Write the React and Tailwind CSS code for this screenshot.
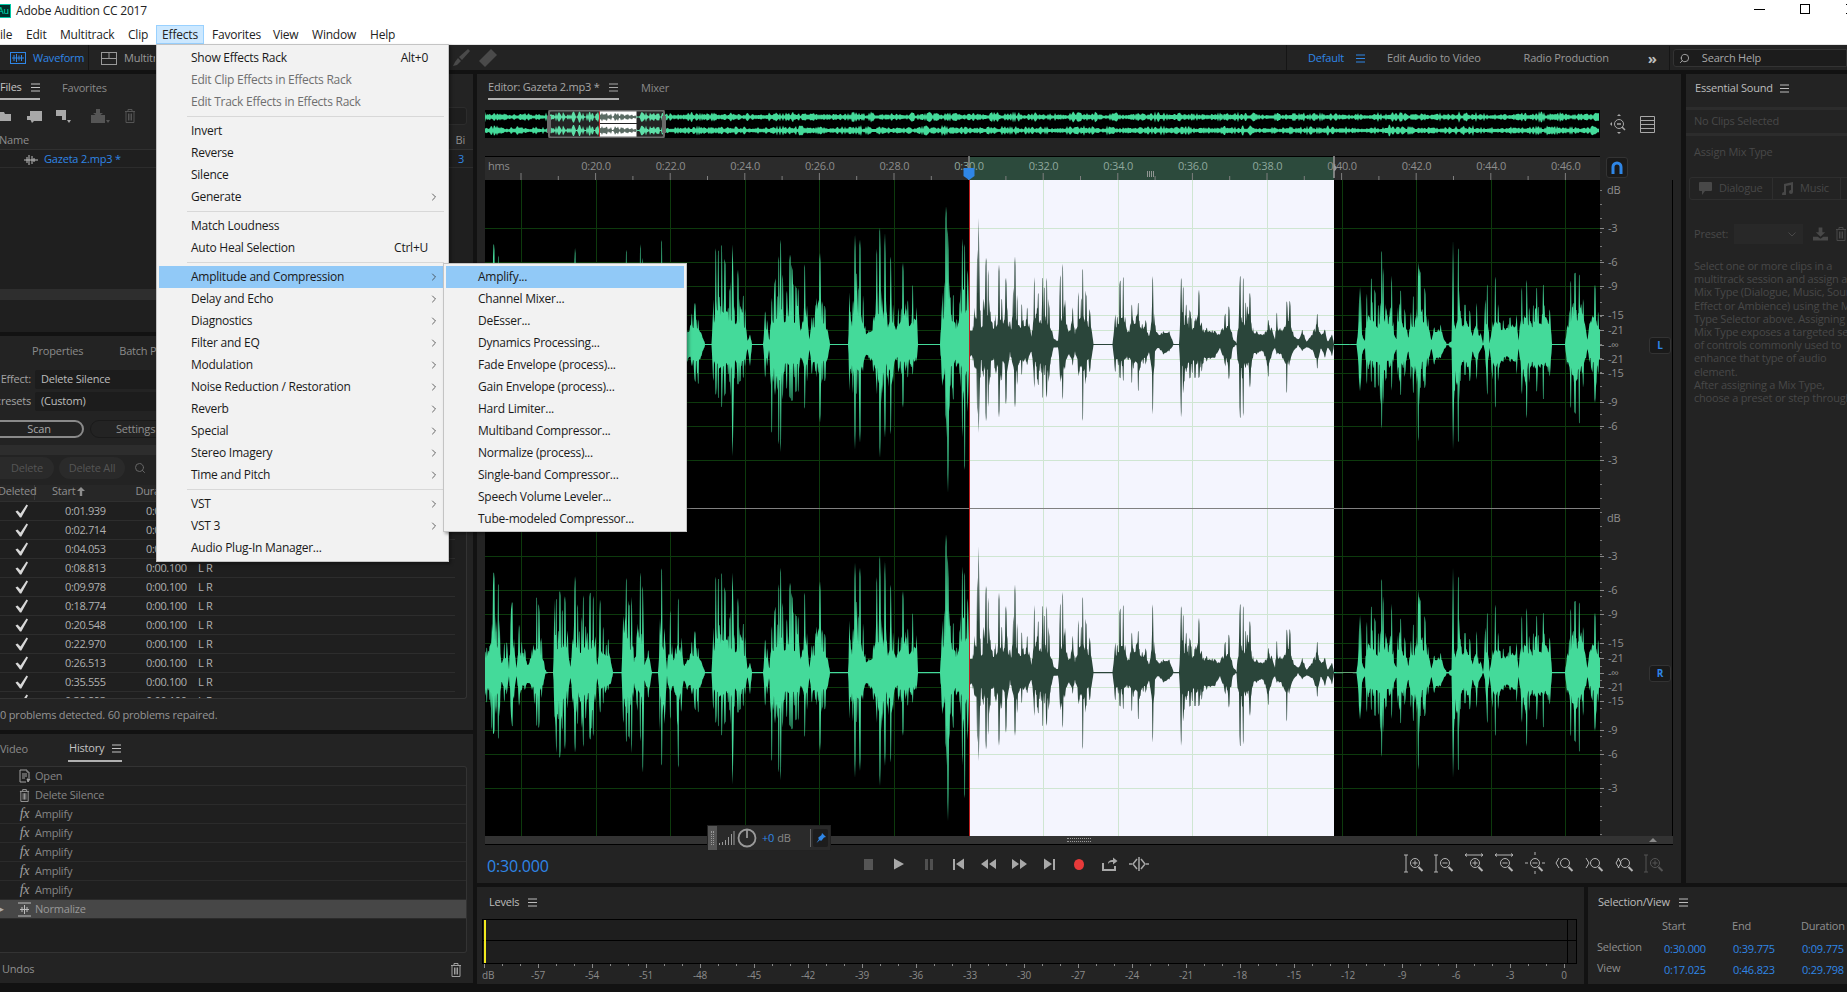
import { ChevronRight, Search } from "lucide-react";

// ---- menus ----
const effectsMenu = [
  [["Show Effects Rack", "Alt+0"], ["Edit Clip Effects in Effects Rack", "", "off"], ["Edit Track Effects in Effects Rack", "", "off"]],
  [["Invert"], ["Reverse"], ["Silence"], ["Generate", "", "sub"]],
  [["Match Loudness"], ["Auto Heal Selection", "Ctrl+U"]],
  [
    ["Amplitude and Compression", "", "sub", "hot"],
    ["Delay and Echo", "", "sub"],
    ["Diagnostics", "", "sub"],
    ["Filter and EQ", "", "sub"],
    ["Modulation", "", "sub"],
    ["Noise Reduction / Restoration", "", "sub"],
    ["Reverb", "", "sub"],
    ["Special", "", "sub"],
    ["Stereo Imagery", "", "sub"],
    ["Time and Pitch", "", "sub"],
  ],
  [["VST", "", "sub"], ["VST 3", "", "sub"], ["Audio Plug-In Manager..."]],
];

const ampMenu = [
  "Amplify...",
  "Channel Mixer...",
  "DeEsser...",
  "Dynamics Processing...",
  "Fade Envelope (process)...",
  "Gain Envelope (process)...",
  "Hard Limiter...",
  "Multiband Compressor...",
  "Normalize (process)...",
  "Single-band Compressor...",
  "Speech Volume Leveler...",
  "Tube-modeled Compressor...",
];

const repairs = ["0:01.939", "0:02.714", "0:04.053", "0:08.813", "0:09.978", "0:18.774", "0:20.548", "0:22.970", "0:26.513", "0:35.555", "0:38.893"];

const essentialText = [
  "Select one or more clips in a",
  "multitrack session and assign a",
  "Mix Type (Dialogue, Music, Sound",
  "Effect or Ambience) using the Mix",
  "Type Selector above. Assigning a",
  "Mix Type exposes a targeted set",
  "of controls commonly used to",
  "enhance that type of audio",
  "element.",
  "After assigning a Mix Type,",
  "choose a preset or step through",
  "the parameters to adjust the",
];

// ---- waveform envelope, read off the picture: [x, up, down] in 1/3 px ----
const segA = [[0,60,60],[5,75,90],[15,80,80],[20,110,170],[25,300,185],[28,300,180],[33,120,100],[40,285,210],[44,140,120],[50,20,20],[58,90,90],[66,90,60],[72,10,10],[78,190,130],[82,220,170],[88,80,60],[95,8,6],[102,145,100],[110,90,50],[120,70,50],[128,20,30],[140,60,45],[155,230,160],[162,200,165],[170,100,70],[180,10,8],[190,3,3],[205,3,3],[208,220,120],[214,220,240],[225,245,255],[232,180,160],[240,230,230],[248,120,100],[256,10,10],[262,90,80],[270,290,240],[278,200,150],[290,150,150],[295,240,230],[302,130,130],[315,240,200],[325,230,190],[332,100,80],[337,10,10],[345,220,120],[355,130,90],[370,100,50],[378,30,30],[384,5,5],[410,5,5],[414,150,140],[424,290,210],[432,200,190],[440,230,245],[447,30,30],[456,120,100],[466,305,200],[474,250,300],[478,20,20],[490,70,78],[500,5,5],[520,5,5],[524,130,150],[530,330,290],[540,100,130],[546,8,8],[556,195,145],[565,30,30],[580,230,295],[590,100,100],[596,20,20],[606,35,50],[620,90,60],[630,125,110],[640,70,120],[650,30,30],[660,5,5],[680,5,5],[684,100,100],[692,290,150],[700,280,160],[710,300,190],[720,250,150]];
const segB = [[0,160,110],[8,310,350],[12,100,100],[24,225,120],[30,110,110],[40,150,100],[46,100,60],[52,10,10],[60,30,65],[66,5,5],[100,5,5],[105,100,100],[112,70,60],[118,5,8],[125,135,280],[135,190,130],[146,255,295],[152,320,325],[158,200,150],[170,150,130],[180,270,160],[186,230,170],[198,170,140],[205,170,145],[212,30,30],[224,250,200],[232,100,100],[238,10,10],[245,80,90],[258,120,80],[270,275,235],[278,120,100],[285,115,110],[295,30,30],[300,5,5],[355,5,5],[358,160,140],[368,100,120],[375,330,315],[380,200,130],[390,315,295],[400,130,60],[408,30,30],[416,40,40],[430,75,80],[440,280,130],[450,350,340],[456,100,120],[465,335,280],[472,50,80],[482,275,280],[490,100,90],[496,45,40],[505,105,80],[519,245,190],[528,100,60],[533,130,100],[548,180,90],[560,110,50],[564,5,5],[630,5,5],[636,120,110],[648,415,225],[654,330,445],[660,140,120],[670,150,170],[680,70,60],[690,130,90],[697,320,270],[704,300,385],[714,210,170]];
const segC = [[208,60,40],[218,40,40],[232,270,200],[236,395,275],[240,100,100],[250,130,90],[258,260,230],[265,220,180],[270,100,100],[285,70,70],[297,240,220],[305,130,100],[318,200,180],[330,50,20],[345,265,190],[352,130,110],[365,120,90],[382,110,60],[395,20,20],[403,205,130],[415,150,120],[428,200,160],[440,200,160],[447,120,100],[460,20,10],[475,10,10],[480,200,100],[488,245,170],[496,120,60],[505,35,30],[518,115,65],[525,30,20],[535,155,90],[548,230,235],[558,150,100],[570,100,80],[580,5,5],[638,5,5],[645,80,80],[660,190,100],[670,205,110],[683,30,40],[695,120,115],[715,125,140],[738,70,55],[748,20,20],[758,215,220],[765,60,20],[775,30,10],[790,40,30],[808,40,20],[820,5,5],[838,5,5],[843,200,220],[850,170,135],[870,100,100],[885,70,100],[897,165,100],[905,60,80],[920,50,50],[945,40,40],[960,30,10],[975,90,60],[987,115,105],[998,20,10],[1010,5,5],[1020,205,220],[1030,200,215],[1037,120,60],[1050,155,130],[1060,40,30],[1070,40,30],[1090,30,20],[1105,75,100],[1115,50,30],[1125,15,10],[1130,100,30],[1145,40,30],[1160,130,150],[1170,130,50],[1180,30,20],[1195,15,5],[1207,45,20],[1220,8,8],[1240,40,20],[1252,95,75],[1262,30,10],[1275,45,40],[1283,8,8],[1296,30,35],[1302,5,5]];
const segD = [[0,3,3],[20,5,5],[25,50,50],[28,170,140],[32,175,140],[36,30,30],[45,10,10],[50,150,120],[64,200,110],[75,160,130],[85,110,120],[95,290,260],[100,215,160],[108,100,100],[125,210,140],[132,30,30],[140,15,15],[142,110,90],[152,165,155],[165,100,90],[175,15,15],[182,90,100],[190,150,150],[198,70,70],[205,250,310],[210,220,130],[225,165,130],[235,70,60],[244,10,10],[252,50,60],[272,60,40],[280,20,20],[290,5,5],[305,10,10],[309,315,315],[314,30,120],[325,310,310],[330,100,110],[345,120,90],[360,100,110],[368,20,15],[380,130,110],[385,30,30],[392,35,15],[400,3,3],[405,120,20],[412,190,165],[418,5,5],[426,45,90],[436,210,195],[445,110,100],[460,70,50],[480,80,50],[500,90,90],[506,5,5],[515,170,145],[530,195,225],[538,100,100],[560,170,140],[580,180,165],[600,100,90],[606,5,5],[645,5,5],[650,40,50],[662,190,190],[675,215,205],[688,210,240],[700,130,120],[712,10,10],[718,60,50],[735,180,175],[745,90,80]];

const envelope = [
  ...segA.map(([z, u, d]) => [z / 3, u / 3, d / 3]),
  ...segB.map(([z, u, d]) => [245 + z / 3, u / 3, d / 3]),
  ...segC.map(([z, u, d]) => [415 + z / 3, u / 3, d / 3]),
  ...segD.map(([z, u, d]) => [865 + z / 3, u / 3, d / 3]),
];

function rnd(i) {
  const s = Math.sin(i * 12.9898) * 43758.5453;
  return s - Math.floor(s);
}

function ampAt(x) {
  let k = 0;
  while (k < envelope.length - 2 && envelope[k + 1][0] < x) k++;
  const [x0, u0, d0] = envelope[k];
  const [x1, u1, d1] = envelope[k + 1];
  const t = Math.max(0, Math.min(1, (x - x0) / (x1 - x0 || 1)));
  const dist = Math.min(Math.abs(x - x0), Math.abs(x1 - x));
  return [u0 + (u1 - u0) * t, d0 + (d1 - d0) * t, dist];
}

// solid body near the centre, thin spikes only where the envelope peaks
function shape(a, dist, r) {
  if (a < 2.5) return a * 0.35;
  if (dist < 0.6) return a;
  if (r > 0.95) return a * 0.85;
  const base = Math.min(a, 14);
  return base * (0.8 + 0.2 * r) + (a - base) * (0.2 + 0.45 * r * r);
}

function wavePath(cy, seed) {
  const top = [];
  const bot = [];
  for (let i = 0; i <= 2230; i++) {
    const x = i / 2;
    const [u, d, dist] = ampAt(x);
    const up = shape(u, dist, rnd(Math.floor(i / 2) + seed));
    const dn = shape(d, dist, rnd(Math.floor(i / 2) + seed + 999));
    top.push(`${x} ${(cy - up).toFixed(1)}`);
    bot.unshift(`${x} ${(cy + dn).toFixed(1)}`);
  }
  return `M${top.join("L")}L${bot.join("L")}Z`;
}

function overviewPath(cy, seed) {
  const top = [];
  const bot = [];
  for (let i = 0; i <= 1114; i++) {
    let a;
    if (i >= 63 && i <= 180) {
      const [u] = ampAt(((i - 63) / 117) * 1115);
      a = Math.min(5.5, u / 18 + 0.5);
    } else {
      const slow = 0.7 + 0.18 * (Math.sin(i * 0.31 + seed) + Math.sin(i * 0.083 + seed * 2));
      a = 1.2 + 4.5 * Math.pow(rnd(i + seed), 1.5) * slow;
    }
    top.push(`${i} ${(cy - a).toFixed(1)}`);
    bot.unshift(`${i} ${(cy + a).toFixed(1)}`);
  }
  return `M${top.join("L")}L${bot.join("L")}Z`;
}

const ticks = Array.from({ length: 15 }, (_, k) => 36 + 74.6 * k);
const hLines = [48, 82, 106, 135, 150, 179, 193, 222, 246, 280];
const dbLabels = [["-3", 48], ["-6", 82], ["-9", 106], ["-15", 135], ["-21", 150], ["-∞", 165], ["-21", 179], ["-15", 193], ["-9", 222], ["-6", 246], ["-3", 280]];

// ---- small icons ----
function Burger({ className = "" }) {
  return (
    <svg width="9" height="9" viewBox="0 0 9 9" className={`shrink-0 ${className}`}>
      <path d="M0 1h9M0 4.5h9M0 8h9" stroke="currentColor" strokeWidth="1" />
    </svg>
  );
}

function Check() {
  return (
    <svg width="14" height="14" viewBox="0 0 14 14">
      <path d="M0.5 7.5L2.5 6.5L5.5 9.5L11.5 0.5L13 1.5L6.3 13.5L5 13.5Z" fill="#d8d8d8" />
    </svg>
  );
}

function TrashIcon({ color = "#8f8f8f", size = 12 }) {
  return (
    <svg width={size} height={size + 2} viewBox="0 0 12 14" fill="none" stroke={color}>
      <path d="M1 2.5h10M4 2.5v-2h4v2M2 2.5v11h8v-11M4.5 4.5v7M6 4.5v7M7.5 4.5v7" />
    </svg>
  );
}

function ZoomIcon({ kind, dim }) {
  const c = dim ? "#555" : "#b4b4b4";
  const glass = kind === "left" || kind === "right" || kind === "both" ? "" : kind.includes("in") ? "M7 9.5h5M9.5 7v5" : "M7 9.5h5";
  return (
    <svg width="26" height="24" viewBox="0 0 26 24" fill="none" stroke={c}>
      <circle cx="10" cy="10" r="4.5" transform="translate(3 1)" />
      <path d="M16.5 15l4 4" strokeWidth="2" />
      <path d={glass} transform="translate(3.5 1.5)" />
      {(kind === "vin" || kind === "vout" || kind === "dimin") && <path d="M4 3v17M2 3h4M2 20h4" />}
      {(kind === "hin" || kind === "hout") && <path d="M3 3h18M3 3l2-1.5M3 3l2 1.5M21 3l-2-1.5M21 3l-2 1.5" />}
      {kind === "all" && <path d="M13 0v3M13 19v3M6 11H3M23 11h-3" />}
      {(kind === "left" || kind === "both") && <path d="M7 6l-3 5 3 5" />}
      {kind === "right" && <path d="M4 6l3 5-3 5" />}
      {kind === "both" && <path d="M8 6l3 5-3 5" transform="translate(-2 0)" />}
    </svg>
  );
}

function Transport({ kind }) {
  return (
    <svg width="20" height="16" viewBox="0 0 20 16">
      {kind === "stop" && <rect x="5" y="3" width="9" height="11" fill="#555" />}
      {kind === "play" && <path d="M5 2.5L15 8L5 13.5Z" fill="#a8a8a8" />}
      {kind === "pause" && <path d="M6 3h3v11H6zM11 3h3v11h-3z" fill="#505050" />}
      {kind === "prev" && <path d="M4 3h2v11H4zM15 2.5v11L7 8z" fill="#a8a8a8" />}
      {kind === "rew" && <path d="M2 8l7-5v10zM10 8l7-5v10z" fill="#a8a8a8" />}
      {kind === "ff" && <path d="M18 8l-7-5v10zM10 8L3 3v10z" fill="#a8a8a8" />}
      {kind === "next" && <path d="M14 3h2v11h-2zM5 2.5v11L13 8z" fill="#a8a8a8" />}
      {kind === "rec" && <ellipse cx="10" cy="8.5" rx="5" ry="5.5" fill="#e83a3a" />}
      {kind === "loop" && <path d="M3 7h2v6h10v-3h2v5H3zM9 8c0-3 2-4 5-4V1.5L18.5 5 14 8.5V6c-2 0-4 0-5 2z" fill="#a8a8a8" />}
      {kind === "skip" && <path d="M8 3L4 8l4 5M12 3l4 5-4 5M10 1v14M0 8h3M17 8h3" fill="none" stroke="#a8a8a8" strokeWidth="1.5" />}
    </svg>
  );
}

function Grid2({ color }) {
  return (
    <svg width="16" height="13" viewBox="0 0 16 13" fill="none" stroke={color} className="shrink-0">
      <rect x="0.5" y="0.5" width="15" height="12" />
      <path d="M0.5 6.5h15M8 0.5v6" />
    </svg>
  );
}

function TabRow({ children, className = "" }) {
  return <div className={`flex items-center text-[11px] pt-[2px] ${className}`}>{children}</div>;
}

function Menu() {
  return (
    <>
      <div className="absolute left-[156px] top-[44px] w-[293px] h-[518px] bg-[#f2f2f2] border border-[#c4c4c4] shadow-[2px_2px_3px_rgba(0,0,0,0.35)] text-[12px] tracking-[-0.25px] text-[#1a1a1a] py-[2px]">
        {effectsMenu.map((group, g) => (
          <div key={g}>
            {g > 0 && <div className="ml-[30px] mr-[4px] my-[3px] h-[1px] bg-[#d8d8d8]" />}
            {group.map(([label, keys, kind, hot]) => (
              <div
                key={label}
                className={`flex items-center h-[22px] pl-[32px] pr-[6px] mx-[2px] ${hot ? "bg-[#91c9f7]" : ""} ${kind === "off" ? "text-[#6f6f6f]" : ""}`}
              >
                <span className="flex-1 whitespace-nowrap">{label}</span>
                {keys && <span className="mr-[12px]">{keys}</span>}
                {kind === "sub" && <ChevronRight size={12} strokeWidth={1.5} className="text-[#333]" />}
              </div>
            ))}
          </div>
        ))}
      </div>
      <div className="absolute left-[443px] top-[263px] w-[244px] h-[269px] bg-[#f2f2f2] border border-[#c4c4c4] shadow-[2px_2px_3px_rgba(0,0,0,0.35)] text-[12px] tracking-[-0.25px] text-[#1a1a1a] pt-[2px]">
        {ampMenu.map((label, i) => (
          <div key={label} className={`flex items-center h-[22px] pl-[32px] mx-[2px] ${i === 0 ? "bg-[#91c9f7]" : ""}`}>
            {label}
          </div>
        ))}
      </div>
    </>
  );
}

function FilesPanel() {
  return (
    <div className="h-[258px] bg-[#232323] flex flex-col text-[#9a9a9a]">
      <TabRow className="h-[26px]">
        <div className="h-full w-[40px] flex items-center gap-[9px] border-b-2 border-[#b0b0b0] text-[#c4c4c4]">
          Files <Burger />
        </div>
        <span className="ml-[22px] text-[#8a8a8a]">Favorites</span>
      </TabRow>
      <div className="h-[32px] flex items-center gap-[12px] text-[#b0b0b0] relative">
        <svg width="13" height="12" viewBox="0 0 13 12" fill="#a8a8a8" className="ml-[-1px]"><path d="M0 2h5l1 2h6v7H0z" /></svg>
        <svg width="17" height="14" viewBox="0 0 17 14" fill="#a8a8a8" className="ml-[2px]"><path d="M4 2h12v10H8l-2 2-2-4zM1 7h5l2 2-2 2H1z" /></svg>
        <svg width="17" height="14" viewBox="0 0 17 14" fill="#a8a8a8"><path d="M1 1h10v10H7V7H1zM12 11h4l-2 3z" /></svg>
        <svg width="20" height="16" viewBox="0 0 20 16" fill="#555" className="ml-[6px]"><path d="M1 7h14v8H1zM6 5V1h4v4h3L8 9 3 5zM16 12h4l-2 3z" /></svg>
        <span className="ml-[2px]"><TrashIcon color="#555" /></span>
        <div className="absolute right-[6px] top-[7px] h-[18px] w-[60px] bg-[#1e1e1e] rounded-[3px] border border-[#2c2c2c]" />
      </div>
      <div className="h-[18px] flex items-center text-[11px] border-b border-[#303030] text-[#8d8d8d]">
        <span className="ml-[-1px]">Name</span>
        <span className="ml-auto mr-[8px]">Bi</span>
      </div>
      <div className="h-[18px] pt-[2px] flex items-center text-[11px] border-b border-[#2c2c2c] bg-[#1f1f1f]">
        <svg width="14" height="10" viewBox="0 0 14 10" className="ml-[24px] mr-[6px]" stroke="#bdbdbd" fill="none"><path d="M0 5h14M3 2v6M5 0v10M8 1v8M10 3v4" /></svg>
        <span className="text-[#2f86e6]">Gazeta 2.mp3 *</span>
        <span className="ml-auto mr-[9px] text-[#2f86e6]">3</span>
      </div>
      <div className="flex-1 bg-[#1f1f1f]" />
      <div className="h-[11px] bg-[#2e2e2e]" />
      <div className="h-[32px] bg-[#1f1f1f]" />
    </div>
  );
}

function PropertiesPanel() {
  return (
    <div className="h-[394px] bg-[#232323] flex flex-col text-[11px] text-[#a4a4a4]">
      <TabRow className="h-[28px] text-[#8a8a8a]">
        <span className="ml-[32px]">Properties</span>
        <span className="ml-[36px]">Batch Process</span>
      </TabRow>
      <div className="mt-[6px] flex items-center h-[19px] mb-[3px]">
        <span className="w-[31px] text-right">Effect:</span>
        <div className="ml-[4px] flex-1 mr-[6px] h-full bg-[#1c1c1c] rounded-[2px] pl-[6px] flex items-center text-[#bdbdbd]">Delete Silence</div>
      </div>
      <div className="flex items-center h-[19px]">
        <span className="w-[31px] text-right whitespace-nowrap overflow-hidden [direction:rtl]">resets:</span>
        <div className="ml-[4px] flex-1 mr-[6px] h-full bg-[#1c1c1c] rounded-[2px] pl-[6px] flex items-center text-[#bdbdbd]">(Custom)</div>
      </div>
      <div className="mt-[9px] flex h-[18px]">
        <div className="ml-[-14px] w-[98px] border-2 border-[#8a8a8a] rounded-full flex items-center justify-center pl-[8px] text-[#a8a8a8]">Scan</div>
        <div className="ml-[6px] w-[120px] border border-[#1a1a1a] rounded-[9px] flex items-center pl-[25px] text-[#8e8e8e]">Settings</div>
      </div>
      <div className="mt-[7px] h-[10px] bg-[#2d2d2d]" />
      <div className="mt-[2px] flex items-center h-[22px] text-[#555]">
        <div className="ml-[-10px] w-[64px] h-full bg-[#2a2a2a] rounded-full flex items-center justify-center pl-[10px]">Delete</div>
        <div className="ml-[5px] w-[66px] h-full bg-[#2a2a2a] rounded-full flex items-center justify-center">Delete All</div>
        <Search size={12} className="ml-[9px] text-[#666]" />
      </div>
      <div className="mt-[6px] h-[214px] mr-[6px] border-b border-r border-[#333] overflow-hidden rounded-br-[3px] bg-[#1f1f1f]">
        <div className="h-[17px] pb-[3px] flex items-center bg-[#272727] text-[#8e8e8e] border-b border-[#2f2f2f]">
          <span className="w-[37px] ml-[-2px] border-r border-[#3a3a3a] mr-[17px]">Deleted</span>
          <span>Start</span>
          <svg width="8" height="9" viewBox="0 0 8 9" fill="#8e8e8e" className="ml-[2px]"><path d="M4 0l4 4H5.2v5H2.8V4H0z" /></svg>
          <span className="ml-[50px]">Duration</span>
        </div>
        {repairs.map((t) => (
          <div key={t} className="h-[19px] flex items-center w-[455px] border-b border-[#2d2d2d] text-[#b0b0b0] tracking-[-0.35px]">
            <span className="w-[65px] pl-[15px]"><Check /></span>
            <span className="w-[81px]">{t}</span>
            <span className="w-[52px]">0:00.100</span>
            <span>L R</span>
          </div>
        ))}
      </div>
      <div className="flex-1 pt-[1px] flex items-center text-[#959595]">
        <span className="ml-[-6px] whitespace-nowrap">60 problems detected. 60 problems repaired.</span>
      </div>
    </div>
  );
}

function HistoryPanel() {
  const rows = [
    ["Open", "open"], ["Delete Silence", "trash"], ["Amplify", "fx"], ["Amplify", "fx"], ["Amplify", "fx"], ["Amplify", "fx"], ["Amplify", "fx"], ["Normalize", "norm"],
  ];
  return (
    <div className="flex-1 bg-[#232323] flex flex-col text-[11px]">
      <TabRow className="h-[28px] shrink-0">
        <span className="text-[#8a8a8a] w-[68px]">Video</span>
        <div className="h-full w-[54px] pl-[1px] flex items-center gap-[8px] border-b-2 border-[#b0b0b0] text-[#c4c4c4]">
          History <Burger />
        </div>
      </TabRow>
      <div className="mt-[4px] h-[187px] mr-[6px] border-t border-r border-b border-[#333] rounded-r-[3px] bg-[#1f1f1f] shrink-0">
        {rows.map(([label, icon], i) => (
          <div key={i} className={`h-[19px] flex items-center border-b border-[#2b2b2b] ${icon === "norm" ? "bg-[#474747] text-[#999]" : "text-[#858585]"}`}>
            {icon === "norm" ? (
              <span className="w-[14px] text-[#aaa] text-[9px] ml-[-3px] mr-[3px]">▶</span>
            ) : (
              <span className="w-[14px]" />
            )}
            <span className="w-[21px] flex justify-center text-[#a0a0a0]">
              {icon === "open" && (
                <svg width="12" height="14" viewBox="0 0 12 14" fill="none" stroke="#a0a0a0"><path d="M1 1h7v2h2v6M1 1v12h6M3 5h5M3 7h5M3 9h3" /><path d="M8 10h3l-2 3z" fill="#a0a0a0" /></svg>
              )}
              {icon === "trash" && <TrashIcon color="#a0a0a0" size={11} />}
              {icon === "fx" && <span className="font-['Liberation_Serif',serif] italic text-[14px] leading-none">fx</span>}
              {icon === "norm" && (
                <svg width="13" height="15" viewBox="0 0 13 15" fill="none" stroke="#bdbdbd"><path d="M0 1h13M0 14h13M2 7.5h9M4 5v5M6.5 3v9M9 5v5" /></svg>
              )}
            </span>
            <span>{label}</span>
          </div>
        ))}
      </div>
      <div className="flex-1 pt-[3px] flex items-center justify-between pr-[11px] pl-[2px] text-[#8f8f8f]">
        <span>Undos</span>
        <TrashIcon color="#a0a0a0" />
      </div>
    </div>
  );
}

function Overview() {
  const ovA = overviewPath(7, 1);
  const ovB = overviewPath(20.5, 4);
  return (
    <svg width="1115" height="28" className="bg-black shrink-0">
      <clipPath id="ovsel"><rect x="114.5" y="0" width="37" height="28" /></clipPath>
      <path d={ovA} fill="#44da9a" />
      <path d={ovB} fill="#44da9a" />
      <rect x="63" y="0" width="117" height="28" fill="#ffffff" opacity="0.14" />
      <rect x="114.5" y="0" width="37" height="13" fill="#fff" />
      <rect x="114.5" y="14" width="37" height="14" fill="#fff" />
      <path d={ovA} fill="#5a6b63" clipPath="url(#ovsel)" />
      <path d={ovB} fill="#5a6b63" clipPath="url(#ovsel)" />
      <path d="M114.5 0v28" stroke="#c23030" />
      <rect x="64" y="0.5" width="115" height="27" rx="2" fill="none" stroke="#6a6a6a" strokeWidth="2" />
      <rect x="62" y="6" width="4" height="17" fill="#6a6a6a" />
      <rect x="177" y="6" width="4" height="17" fill="#6a6a6a" />
    </svg>
  );
}

function Ruler() {
  const labels = ["0:20.0", "0:22.0", "0:24.0", "0:26.0", "0:28.0", "0:30.0", "0:32.0", "0:34.0", "0:36.0", "0:38.0", "0:40.0", "0:42.0", "0:44.0", "0:46.0"];
  return (
    <svg width="1115" height="24" className="shrink-0" fill="#8d8d8d">
      <rect width="1115" height="24" fill="#2b2b2b" />
      <rect x="484" width="365" height="24" fill="#2c4a3c" />
      <path d="M0 0.5h1115" stroke="#000" />
      <text x="3" y="14" fontSize="11">hms</text>
      {labels.map((l, k) => (
        <text key={l} x={111 + 74.6 * k} y="14" fontSize="11" textAnchor="middle" fill={k >= 5 && k < 10 ? "#8fa89c" : "#8d8d8d"}>{l}</text>
      ))}
      {ticks.map((x) => (
        <path key={x} d={`M${x} 17v7M${x + 37.3} 20v4`} stroke="#7e7e7e" />
      ))}
      <path d="M484 0v12" stroke="#8a8a8a" strokeWidth="1.5" />
      <path d="M478.5 12h11v8l-5.5 4-5.5-4z" fill="#2f86e6" />
      <path d="M849 0v22M849 9l2 3-2 3" stroke="#9a9a9a" strokeWidth="1.5" fill="none" />
      <path d="M662.5 15v6M664.5 15v6M666.5 15v6M668.5 15v6" stroke="#a8a8a8" strokeWidth="0.8" />
    </svg>
  );
}

function WaveCanvas() {
  const pathL = wavePath(164.5, 7);
  const pathR = wavePath(492.7, 7);
  return (
    <svg width="1115" height="656" className="bg-black shrink-0">
      <clipPath id="sel"><rect x="484" y="0" width="365" height="656" /></clipPath>
      <clipPath id="nosel"><path d="M0 0h484v656H0zM849 0h266v656H849z" /></clipPath>
      <rect x="484" width="365" height="656" fill="#f4f5fe" />
      {[0, 328].flatMap((off) =>
        hLines.map((y) => (
          <g key={y + off}>
            <path d={`M0 ${y + off + 0.5}h1115`} stroke="#0d3a0d" clipPath="url(#nosel)" />
            <path d={`M0 ${y + off + 0.5}h1115`} stroke="#cfe6d2" clipPath="url(#sel)" />
          </g>
        ))
      )}
      {ticks.map((x) => (
        <g key={x}>
          <path d={`M${Math.round(x) + 0.5} 0v656`} stroke="#0d3a0d" clipPath="url(#nosel)" />
          <path d={`M${Math.round(x) + 0.5} 0v656`} stroke="#cfe6d2" clipPath="url(#sel)" />
        </g>
      ))}
      <path d="M0 164.5h1115M0 492.5h1115" stroke="#c00000" />
      <path d={pathL} fill="#44da9a" clipPath="url(#nosel)" />
      <path d={pathR} fill="#44da9a" clipPath="url(#nosel)" />
      <path d={pathL} fill="#2a453a" clipPath="url(#sel)" />
      <path d={pathR} fill="#2a453a" clipPath="url(#sel)" />
      <path d="M0 328.5h1115" stroke="#808080" />
      <path d="M484.5 0v656" stroke="#c02020" />
    </svg>
  );
}

function DbRuler() {
  const minor = [];
  for (let y = 10; y < 656; y += 14) minor.push(y);
  return (
    <div className="relative w-[73px] h-[656px] border-r border-black bg-[#232323] shrink-0">
      <svg width="72" height="656" fill="#8f8f8f">
        <text x="7" y="14" fontSize="11">dB</text>
        <text x="7" y="342" fontSize="11">dB</text>
        {minor.map((y) => <path key={y} d={`M0 ${y + 0.5}h2`} stroke="#777" />)}
        {[0, 328].flatMap((off) =>
          dbLabels.map(([l, y]) => (
            <g key={`${l}${y}${off}`}>
              <path d={`M0 ${y + off + 0.5}h4`} stroke="#888" />
              <text x="8" y={y + off + 4} fontSize="11">{l}</text>
            </g>
          ))
        )}
      </svg>
      <div className="absolute left-[49px] top-[157px] w-[22px] h-[17px] bg-[#1a1a1a] border border-[#333] rounded-[3px] text-[#2f86e6] text-[10px] font-bold flex items-center justify-center">L</div>
      <div className="absolute left-[49px] top-[485px] w-[22px] h-[17px] bg-[#1a1a1a] border border-[#333] rounded-[3px] text-[#2f86e6] text-[10px] font-bold flex items-center justify-center">R</div>
    </div>
  );
}

function Hud() {
  return (
    <div className="absolute left-[230px] top-[751px] w-[124px] h-[26px] bg-[#2a2a2a] border border-[#222] flex items-center text-[11px]">
      <div className="w-[9px] h-full bg-[#555] flex items-center justify-center">
        <div className="w-[3px] h-[14px] border-x border-dotted border-[#999]" />
      </div>
      <svg width="17" height="16" viewBox="0 0 17 16" className="ml-[1px]" stroke="#9a9a9a"><path d="M1.5 15v-2M4.5 15v-3M7.5 15v-5M10.5 15V7M13.5 15V4M16 15V1" /></svg>
      <svg width="20" height="20" viewBox="0 0 20 20" fill="none" stroke="#9a9a9a" strokeWidth="1.8" className="ml-[2px]"><circle cx="10" cy="10" r="8.5" /><path d="M10 2v8" /></svg>
      <span className="ml-[5px] text-[#2f86e6]">+0</span>
      <span className="ml-[3px] text-[#888]">dB</span>
      <div className="ml-auto h-[18px] w-[1px] bg-[#666]" />
      <div className="mx-[2px] w-[15px] h-[18px] bg-[#1d1d1d] rounded-[2px] flex items-center justify-center">
        <svg width="10" height="10" viewBox="0 0 10 10" fill="#2f86e6"><path d="M6 0l4 4-2 .5-2 2.5L5 8 2 5l1-1 2.5-2zM3 6l1 1-3.5 3z" /></svg>
      </div>
    </div>
  );
}

function EditorPanel() {
  return (
    <div className="relative w-[1204px] shrink-0 bg-[#232323] flex flex-col">
      <TabRow className="h-[26px] ml-[11px] shrink-0">
        <div className="h-full w-[131px] flex items-center justify-between pr-[1px] border-b-2 border-[#b0b0b0] text-[#a8a8a8]">
          Editor: Gazeta 2.mp3 * <Burger />
        </div>
        <span className="ml-[22px] text-[#8a8a8a]">Mixer</span>
      </TabRow>
      <div className="mt-[10px] ml-[8px] flex items-center shrink-0">
        <Overview />
        <svg width="18" height="20" viewBox="0 0 18 20" fill="none" stroke="#a8a8a8" className="ml-[10px]">
          <circle cx="9" cy="10" r="4.5" /><path d="M7 10h4M12 13l3 3" strokeWidth="1.5" /><path d="M9 0l-2 2h4zM9 20l-2-2h4zM0 10l2-2v4z" fill="#a8a8a8" stroke="none" />
        </svg>
        <svg width="15" height="17" viewBox="0 0 15 17" fill="none" stroke="#a8a8a8" className="ml-[12px]"><path d="M0.5 0.5h14v16H0.5zM0.5 4.5h14M0.5 8.5h14M0.5 12.5h14" /></svg>
      </div>
      <div className="mt-[18px] ml-[8px] flex items-start shrink-0">
        <Ruler />
        <div className="ml-[6px] mt-[1px] w-[22px] h-[21px] bg-[#1a1a1a] border border-[#333] rounded-[3px] flex items-center justify-center">
          <svg width="12" height="13" viewBox="0 0 12 13" fill="none" stroke="#2f86e6" strokeWidth="3"><path d="M2 13V6a4 4 0 018 0v7" /></svg>
        </div>
      </div>
      <div className="ml-[8px] flex shrink-0">
        <WaveCanvas />
        <DbRuler />
      </div>
      <div className="ml-[8px] w-[1188px] h-[9px] bg-[#333] border-b border-black relative flex items-center justify-center shrink-0">
        <div className="w-[24px] h-[4px] border-y border-dotted border-[#999]" />
        <div className="absolute right-[16px] top-[2px] w-0 h-0 border-x-[4px] border-b-[4px] border-x-transparent border-b-[#888]" />
      </div>
      <div className="flex-1 flex items-center">
        <span className="ml-[10px] w-[367px] pt-[4px] text-[#2f86e6] text-[16px]">0:30.000</span>
        {["stop", "play", "pause", "prev", "rew", "ff", "next", "rec", "loop", "skip"].map((k) => (
          <div key={k} className="w-[30px] flex justify-center"><Transport kind={k} /></div>
        ))}
        <div className="ml-[248px] flex gap-[4px]">
          {["vin", "vout", "hin", "hout", "all", "left", "right", "both"].map((k) => (
            <ZoomIcon key={k} kind={k} />
          ))}
          <ZoomIcon kind="dimin" dim />
        </div>
      </div>
      <Hud />
    </div>
  );
}

function EssentialPanel() {
  return (
    <div className="flex-1 min-w-0 bg-[#232323] overflow-hidden text-[11px] text-[#484848] whitespace-nowrap">
      <div className="h-[33px] pb-[5px] pl-[9px] flex items-center gap-[7px] text-[#bdbdbd]">Essential Sound <Burger /></div>
      <div className="h-[3px] bg-[#2c2c2c]" />
      <div className="h-[23px] pl-[8px] flex items-center">No Clips Selected</div>
      <div className="h-[3px] bg-[#2c2c2c]" />
      <div className="h-[33px] pl-[8px] flex items-center">Assign Mix Type</div>
      <div className="mt-[8px] ml-[3px] h-[23px] w-[200px] border border-[#2e2e2e] rounded-[3px] flex items-center">
        <div className="w-[83px] h-full border-r border-[#2e2e2e] flex items-center gap-[7px] pl-[9px]">
          <svg width="13" height="13" viewBox="0 0 13 13" fill="#484848"><path d="M1 0h11a1 1 0 011 1v7a1 1 0 01-1 1H6l-3 4V9H1a1 1 0 01-1-1V1a1 1 0 011-1z" /></svg>
          Dialogue
        </div>
        <div className="w-[68px] h-full border-r border-[#2e2e2e] flex items-center gap-[6px] pl-[8px]">
          <svg width="13" height="13" viewBox="0 0 13 13" fill="#484848"><path d="M3 2l9-2v10a2 2 0 11-2-2V3L5 4v8a2 2 0 11-2-2z" /></svg>
          Music
        </div>
      </div>
      <div className="mt-[24px] h-[20px] pl-[8px] flex items-center">
        Preset:
        <div className="ml-[6px] w-[73px] h-full bg-[#282828] flex items-center justify-end pr-[7px]">
          <svg width="8" height="5" viewBox="0 0 8 5" fill="none" stroke="#484848"><path d="M0.5 0.5L4 4l3.5-3.5" /></svg>
        </div>
        <svg width="16" height="14" viewBox="0 0 16 14" fill="#484848" className="ml-[10px]"><path d="M0 10h5l3 2 3-2h5v4H0zM6 0h4v5h3l-5 5-5-5h3z" /></svg>
        <span className="ml-[7px]"><TrashIcon color="#484848" /></span>
      </div>
      <div className="mt-[15px] pl-[8px] h-[148px] overflow-hidden leading-[13.2px]">
        {essentialText.map((l) => <div key={l}>{l}</div>)}
      </div>
    </div>
  );
}

function LevelsPanel() {
  const nums = [-57, -54, -51, -48, -45, -42, -39, -36, -33, -30, -27, -24, -21, -18, -15, -12, -9, -6, -3, 0];
  const small = Array.from({ length: 60 }, (_, k) => 2 + k * 18);
  return (
    <div className="w-[1107px] shrink-0 bg-[#232323] flex flex-col text-[11px]">
      <TabRow className="h-[28px] ml-[12px] gap-[9px] text-[#bdbdbd] shrink-0">Levels <Burger /></TabRow>
      <div className="ml-[5px] mt-[4px] w-[1095px] h-[45px] border border-black bg-[#1e1e1e] flex flex-col relative shrink-0">
        <div className="absolute left-[1px] top-0 bottom-0 w-[2px] bg-[#f0e81e]" />
        <div className="h-[21px] border-b border-black" />
        <div className="absolute right-[8px] top-0 bottom-0 w-[1px] bg-black" />
      </div>
      <svg width="1100" height="20" className="ml-[5px] shrink-0" fill="#8a8a8a">
        {small.map((x) => <path key={x} d={`M${x + 0.5} 0v2`} stroke="#888" />)}
        <path d="M2.5 0v4" stroke="#888" />
        <text x="0" y="15" fontSize="10">dB</text>
        {nums.map((n, k) => (
          <g key={n}>
            <path d={`M${56 + 54 * k + 0.5} 0v4`} stroke="#888" />
            <text x={56 + 54 * k} y="15" fontSize="10" textAnchor="middle">{n}</text>
          </g>
        ))}
      </svg>
    </div>
  );
}

function SelectionPanel() {
  return (
    <div className="flex-1 min-w-0 bg-[#232323] text-[11px] text-[#8f8f8f] whitespace-nowrap overflow-hidden">
      <TabRow className="h-[28px] pl-[10px] gap-[9px] text-[#bdbdbd]">Selection/View <Burger /></TabRow>
      <div className="grid grid-cols-[65px_70px_69px_70px] pl-[9px]">
        <div className="h-[22px]" />
        <div className="h-[22px] flex items-center">Start</div>
        <div className="h-[22px] flex items-center">End</div>
        <div className="h-[22px] flex items-center">Duration</div>
        <div className="h-[21px] flex items-center">Selection</div>
        <div className="h-[21px] flex items-center pl-[2px] text-[#2f86e6] pt-[3px]">0:30.000</div>
        <div className="h-[21px] flex items-center pl-[1px] text-[#2f86e6] pt-[3px]">0:39.775</div>
        <div className="h-[21px] flex items-center pl-[1px] text-[#2f86e6] pt-[3px]">0:09.775</div>
        <div className="h-[21px] flex items-center">View</div>
        <div className="h-[21px] flex items-center pl-[2px] text-[#2f86e6] pt-[3px]">0:17.025</div>
        <div className="h-[21px] flex items-center pl-[1px] text-[#2f86e6] pt-[3px]">0:46.823</div>
        <div className="h-[21px] flex items-center pl-[1px] text-[#2f86e6] pt-[3px]">0:29.798</div>
      </div>
    </div>
  );
}

export default function App() {
  return (
    <div className="relative w-[1847px] h-[992px] overflow-hidden flex flex-col bg-[#121212] font-['Open_Sans',sans-serif] tracking-[-0.2px]">
      {/* title bar */}
      <div className="h-[22px] bg-white flex items-center text-[12px] text-[#222] shrink-0">
        <div className="ml-[-4px] w-[15px] h-[14px] bg-[#00302b] border border-[#00c9a7] text-[#00e0bb] text-[9px] flex items-center justify-center">Au</div>
        <span className="ml-[5px]">Adobe Audition CC 2017</span>
        <div className="ml-auto relative w-[100px] h-full">
          <div className="absolute left-[7px] top-[9px] w-[11px] h-[1px] bg-black" />
          <div className="absolute left-[53px] top-[4px] w-[10px] h-[10px] border border-black" />
          <svg width="10" height="10" viewBox="0 0 10 10" className="absolute left-[99px] top-[4px]" stroke="#000"><path d="M0 0l10 10M10 0L0 10" /></svg>
        </div>
      </div>
      {/* menu bar */}
      <div className="h-[23px] pt-[3px] bg-white flex items-center text-[12px] text-[#222] shrink-0 border-b border-[#e5e5e5]">
        <span className="w-[26px]">ile</span>
        <span className="w-[34px]">Edit</span>
        <span className="w-[68px]">Multitrack</span>
        <span className="w-[28px]">Clip</span>
        <span className="w-[48px] h-[19px] bg-[#cce8ff] border border-[#99d1ff] flex items-center justify-center">Effects</span>
        <span className="ml-[8px] w-[61px]">Favorites</span>
        <span className="w-[39px]">View</span>
        <span className="w-[58px]">Window</span>
        <span>Help</span>
      </div>
      {/* toolbar */}
      <div className="h-[25px] bg-[#232323] flex items-center text-[11px] shrink-0">
        <div className="h-full pt-[1px] flex items-center w-[89px] pl-[10px] gap-[7px] border-r border-[#151515] text-[#2f86e6] shrink-0">
          <svg width="16" height="12" viewBox="0 0 16 12" fill="none" stroke="#2f86e6" className="shrink-0"><rect x="0.5" y="0.5" width="15" height="11" /><path d="M2 6h12M4 3v6M6.5 2v8M9 3.5v5M11.5 3v6" /></svg>
          Waveform
        </div>
        <div className="h-full pt-[1px] flex items-center w-[66px] pl-[12px] gap-[7px] text-[#999] overflow-hidden whitespace-nowrap shrink-0">
          <Grid2 color="#999" />
          Multitrack
        </div>
        <svg width="18" height="18" viewBox="0 0 18 18" fill="#4a4a4a" className="ml-[297px]"><path d="M16 0l2 2-8 9-3-3zM6 9l3 3-4 4-4 1 2-4z" /></svg>
        <svg width="18" height="18" viewBox="0 0 18 18" fill="#4a4a4a" className="ml-[9px]"><path d="M12 0l6 6-12 12-6-6z" /></svg>
        <div className="h-full pt-[1px] ml-auto w-[561px] flex items-center border-l border-[#151515] text-[#9a9a9a] whitespace-nowrap">
          <span className="ml-[21px] text-[#2f86e6]">Default</span>
          <Burger className="ml-[12px] text-[#2f86e6]" />
          <span className="ml-[22px]">Edit Audio to Video</span>
          <span className="ml-[43px]">Radio Production</span>
          <span className="ml-[39px] text-[#bdbdbd] font-bold text-[15px] leading-none">»</span>
          <div className="ml-[12px] h-full w-[1px] bg-[#151515]" />
          <div className="ml-[3px] h-[18px] flex-1 bg-[#1c1c1c] border border-[#333] rounded-l-[3px] flex items-center pl-[5px] gap-[12px] text-[#a8a8a8]">
            <Search size={11} className="-scale-x-100" />
            Search Help
          </div>
        </div>
      </div>
      {/* body */}
      <div className="mt-[4px] flex gap-[4px] h-[909px] shrink-0">
        <div className="w-[473px] shrink-0 flex flex-col gap-[4px]">
          <FilesPanel />
          <PropertiesPanel />
          <HistoryPanel />
        </div>
        <div className="flex-1 min-w-0 flex flex-col gap-[4px]">
          <div className="h-[809px] flex gap-[5px] shrink-0">
            <EditorPanel />
            <EssentialPanel />
          </div>
          <div className="flex-1 flex gap-[4px]">
            <LevelsPanel />
            <SelectionPanel />
          </div>
        </div>
      </div>
      <Menu />
    </div>
  );
}
